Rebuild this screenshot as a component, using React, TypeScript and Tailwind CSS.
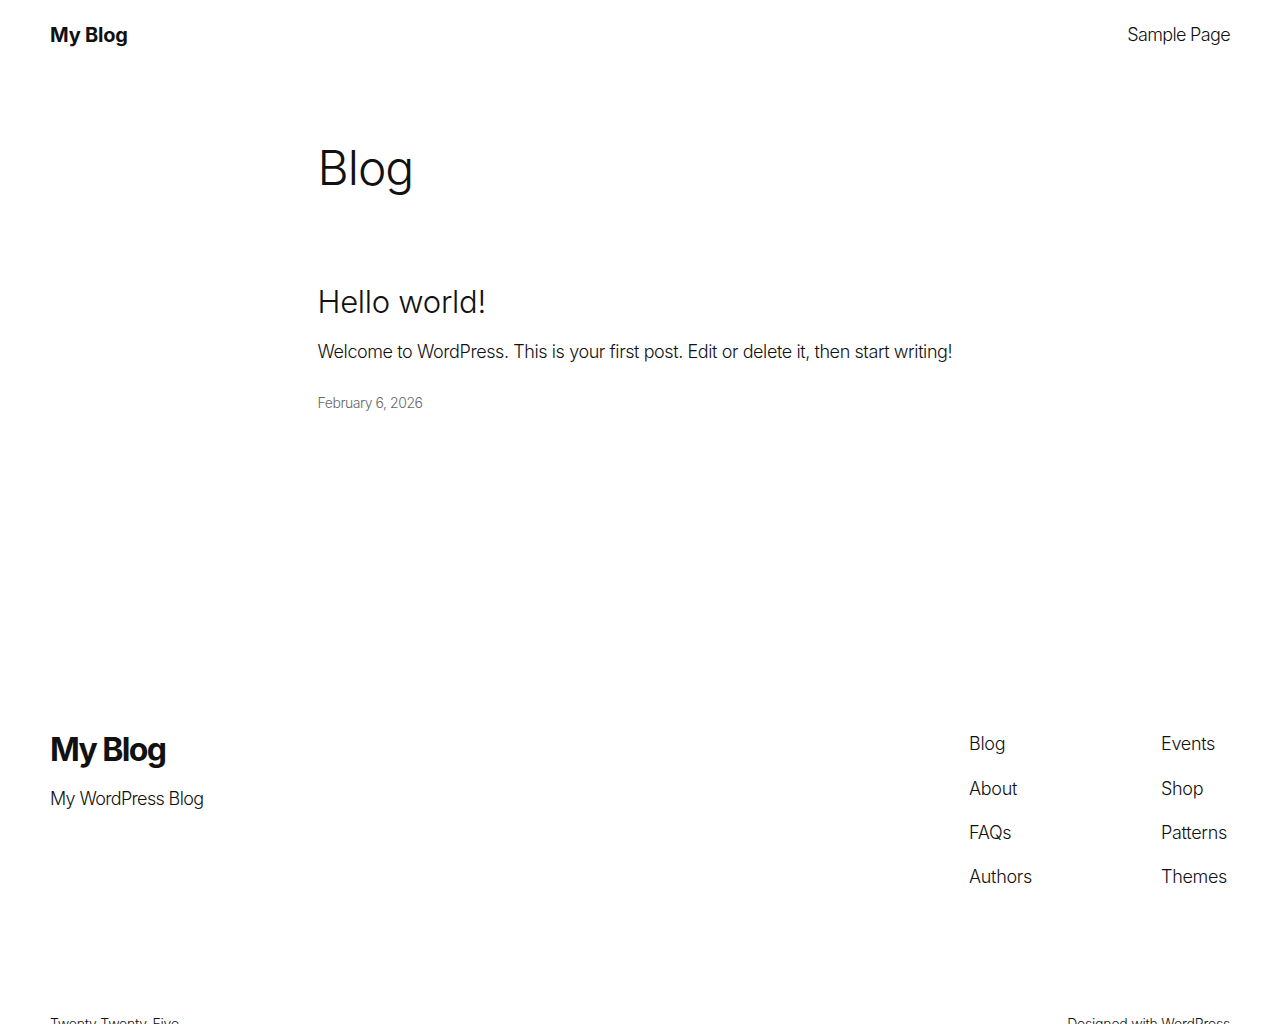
import React from "react";

const font = { fontFamily: "Inter, 'Noto Sans', sans-serif" };

export default function App() {
  return (
    <div className="min-h-screen bg-white text-[#111111]" style={font}>
      <header className="flex items-center justify-between px-[50px] pt-[21px] h-[49px]">
        <a className="text-[20px] leading-[28px] font-bold tracking-[-0.2px]">My Blog</a>
        <nav>
          <a className="text-[18px] leading-[28px] font-light tracking-[-0.65px]">Sample Page</a>
        </nav>
      </header>

      <main className="mx-auto w-[645px]">
        <h1 className="mt-[90px] text-[48px] leading-[57.6px] font-light tracking-[-1px]">Blog</h1>
        <article className="mt-[87px]">
          <h2 className="text-[31px] leading-[36px] font-light tracking-[-0.27px]">Hello world!</h2>
          <p className="mt-[18px] text-[18px] leading-[28.8px] font-light tracking-[-0.41px]">
            Welcome to WordPress. This is your first post. Edit or delete it, then start writing!
          </p>
          <div className="mt-[26px] text-[14px] leading-[21px] font-light text-[#686868] tracking-[-0.45px]">
            February 6, 2026
          </div>
        </article>
      </main>

      <footer className="px-[50px] mt-[318px]">
        <div className="flex justify-between">
          <div>
            <div className="text-[32px] leading-[38.4px] font-bold tracking-[-1.6px]">My Blog</div>
            <div className="mt-[15px] text-[18px] leading-[28.8px] font-light tracking-[-0.65px]">My WordPress Blog</div>
          </div>
          <div className="grid grid-cols-[192px_69px] -mt-[1px]">
            <div className="flex flex-col gap-[15.5px]">
              {["Blog", "About", "FAQs", "Authors"].map((t) => (
                <a key={t} className="text-[18px] leading-[28.8px] font-light whitespace-nowrap tracking-[-0.3px]">{t}</a>
              ))}
            </div>
            <div className="flex flex-col gap-[15.5px]">
              {["Events", "Shop", "Patterns", "Themes"].map((t) => (
                <a key={t} className="text-[18px] leading-[28.8px] font-light whitespace-nowrap tracking-[-0.3px]">{t}</a>
              ))}
            </div>
          </div>
        </div>
        <div className="mt-[121px] flex justify-between text-[14px] leading-[21px] font-light tracking-[-0.2px]">
          <span>Twenty Twenty-Five</span>
          <span>Designed with WordPress</span>
        </div>
      </footer>
    </div>
  );
}
